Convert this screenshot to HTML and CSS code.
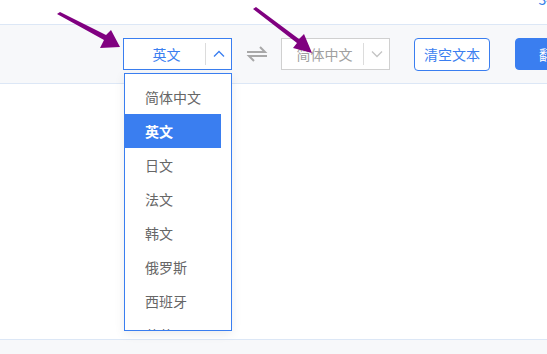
FILE: index.html
```html
<!DOCTYPE html>
<html lang="zh-CN">
<head>
<meta charset="utf-8">
<title>翻译</title>
<link rel="stylesheet" href="styles.css">
</head>
<body>
<div class="page">
  <header class="topbar"><span class="toplink">34</span></header>
  <div class="toolbar">
    <div class="select select-src">
      <span class="select-label">英文</span>
      <span class="select-arrow">
        <svg width="12" height="8" viewBox="0 0 12 8"><path d="M1 6.5 L6 1.5 L11 6.5" fill="none" stroke="#3a7ef0" stroke-width="1.3"/></svg>
      </span>
      <ul class="dropdown">
        <li class="option">简体中文</li>
        <li class="option selected">英文</li>
        <li class="option">日文</li>
        <li class="option">法文</li>
        <li class="option">韩文</li>
        <li class="option">俄罗斯</li>
        <li class="option">西班牙</li>
        <li class="option">葡萄牙</li>
      </ul>
    </div>
    <span class="swap">
      <svg width="22" height="18" viewBox="0 0 22 18"><path d="M1 7 H19 L14 2" fill="none" stroke="#a8a8a8" stroke-width="2"/><path d="M21 11 H3 L8 16" fill="none" stroke="#a8a8a8" stroke-width="2"/></svg>
    </span>
    <div class="select select-dst">
      <span class="select-label">简体中文</span>
      <span class="select-arrow">
        <svg width="12" height="8" viewBox="0 0 12 8"><path d="M1 1.5 L6 6.5 L11 1.5" fill="none" stroke="#c4c4c4" stroke-width="1.3"/></svg>
      </span>
    </div>
    <button class="btn btn-outline">清空文本</button>
    <button class="btn btn-primary">翻译</button>
  </div>
  <main class="editor"></main>
  <footer class="footer"></footer>
  <svg class="annotations" width="547" height="354" viewBox="0 0 547 354">
    <path d="M57 14 L60 12 L106 35 L111 30 L120 47 L100 48 L104 40 Z" fill="#800080"/>
    <path d="M253 9 L256 7 L299 39 L304 34 L312 53 L293 48 L297 43 Z" fill="#800080"/>
  </svg>
</div>
</body>
</html>
```

FILE: styles.css
```css
* { box-sizing: border-box; }
html, body { margin: 0; padding: 0; }
body {
  width: 547px;
  height: 354px;
  overflow: hidden;
  background: #ffffff;
  font-family: "Noto Sans CJK SC", "Noto Sans", sans-serif;
  font-size: 14px;
}
.page { position: relative; width: 547px; height: 354px; overflow: hidden; }

.topbar {
  height: 25px;
  border-bottom: 1px solid #dce7f6;
  display: flex;
  justify-content: flex-end;
  overflow: hidden;
}
.toplink {
  color: #2b7be8;
  font-size: 14px;
  line-height: 14px;
  margin-top: -8px;
  margin-right: -7px;
}

.toolbar {
  height: 59px;
  background: #f7f8fa;
  border-bottom: 1px solid #dce7f6;
  display: flex;
  align-items: center;
  padding-left: 123px;
  white-space: nowrap;
}

.select {
  position: relative;
  height: 32px;
  width: 109px;
  background: #fff;
  display: flex;
  align-items: center;
  flex: none;
}
.select-src { border: 1px solid #3a7ef0; }
.select-dst { border: 1px solid #d0d0d0; width: 109px; }
.select-label {
  flex: 1;
  text-align: center;
  line-height: 30px;
  padding-left: 4px;
}
.select-src .select-label { color: #3a7ef0; }
.select-dst .select-label { color: #a0a0a0; }
.select-arrow {
  width: 26px;
  height: 22px;
  border-left: 1px solid #dcdcdc;
  display: flex;
  align-items: center;
  justify-content: center;
}

.swap {
  margin: 0 13px 0 14px;
  display: flex;
  align-items: center;
}

.dropdown {
  position: absolute;
  top: calc(100% + 4px);
  left: 0;
  width: 108px;
  height: 258px;
  margin: 0;
  padding: 6px 10px 0 0;
  list-style: none;
  background: #fff;
  border: 1px solid #3a7ef0;
  box-shadow: 0 3px 10px rgba(0, 0, 0, 0.08);
  overflow: hidden;
  z-index: 5;
}
.option {
  height: 34px;
  line-height: 34px;
  padding-left: 20px;
  color: #666;
  font-size: 14px;
}
.option.selected {
  background: #3a7ef0;
  color: #fff;
  font-weight: bold;
}

.btn {
  height: 33px;
  border-radius: 4px;
  font-family: "Noto Sans CJK SC", "Noto Sans", sans-serif;
  font-size: 14px;
  padding: 0;
  flex: none;
}
.btn-outline {
  margin-left: 24px;
  width: 76px;
  background: #fff;
  color: #3a7ef0;
  border: 1px solid #3a7ef0;
}
.btn-primary {
  margin-left: 25px;
  width: 76px;
  height: 32px;
  background: #3a7ef0;
  color: #fff;
  border: 1px solid #3a7ef0;
}

.editor {
  height: 256px;
  border-bottom: 1px solid #dce7f6;
  background: #fff;
}
.footer {
  height: 20px;
  background: #f7f8fa;
}

.annotations {
  position: absolute;
  left: 0;
  top: 0;
  pointer-events: none;
  z-index: 10;
}
```
